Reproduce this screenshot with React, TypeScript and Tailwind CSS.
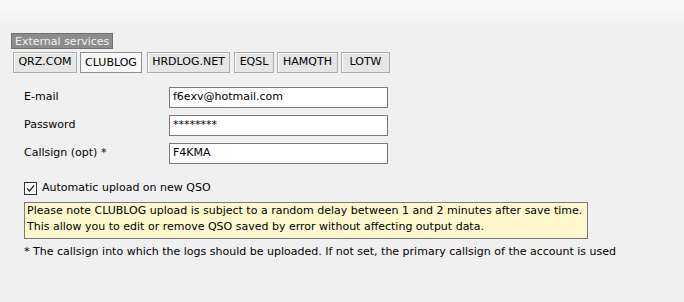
export default function App() {
  const tabs = [
    { name: 'QRZ.COM', w: 'w-[64px]', ml: 'ml-0' },
    { name: 'CLUBLOG', w: 'w-[62px]', ml: 'ml-[3px]', active: true },
    { name: 'HRDLOG.NET', w: 'w-[83px]', ml: 'ml-[5px]' },
    { name: 'EQSL', w: 'w-[40px]', ml: 'ml-[4px]' },
    { name: 'HAMQTH', w: 'w-[61px]', ml: 'ml-[3px]' },
    { name: 'LOTW', w: 'w-[49px]', ml: 'ml-[3px]' },
  ];

  const fields = [
    { label: 'E-mail', value: 'f6exv@hotmail.com' },
    { label: 'Password', value: '********' },
    { label: 'Callsign (opt) *', value: 'F4KMA' },
  ];

  return (
    <div className="w-[684px] h-[302px] overflow-hidden bg-[linear-gradient(to_bottom,#f8f8f8_0px,#f7f7f7_12px,#f0f0f0_26px)] text-[11px] text-black font-['DejaVu_Sans',sans-serif] pt-[33px]">
      {/* section label */}
      <div className="ml-[11px] inline-flex h-[16px] items-center px-[3px] bg-[#8c8c8c] border border-[#707070] text-[#f2f2f2] leading-none">
        External services
      </div>

      {/* service tabs */}
      <div className="flex ml-[13px] mt-[2px]">
        {tabs.map(t => (
          <div
            key={t.name}
            className={`${t.w} ${t.ml} h-[21px] flex items-center justify-center border ${
              t.active
                ? 'bg-[#f7f7f7] border-[#8f8f8f] pt-[2px]'
                : 'bg-[#e6e6e6] border-[#acacac] shadow-[inset_1px_1px_0_#ffffff]'
            }`}
          >
            {t.name}
          </div>
        ))}
      </div>

      {/* account fields */}
      <div className="flex flex-col gap-[7px] mt-[14px] pl-[24px]">
        {fields.map(f => (
          <div key={f.label} className="flex items-center">
            <div className="w-[145px]">{f.label}</div>
            <div className="w-[219px] h-[21px] bg-white border border-[#7a7a7a] flex items-center px-[3px]">
              {f.value}
            </div>
          </div>
        ))}
      </div>

      {/* auto upload */}
      <div className="flex items-center mt-[16px] pl-[24px]">
        <div className="w-[13px] h-[13px] border border-[#333333] bg-white flex items-center justify-center">
          <svg width="11" height="11" viewBox="0 0 11 11">
            <path d="M2 5.5 L4.5 8 L9 2.5" fill="none" stroke="#222" strokeWidth="1.2" />
          </svg>
        </div>
        <span className="ml-[5px]">Automatic upload on new QSO</span>
      </div>

      <div className="ml-[24px] mt-[5px] w-[564px] bg-[#fff8cf] border border-[#7a7a7a] px-[2px] pb-[3px] leading-[16px]">
        <div>Please note CLUBLOG upload is subject to a random delay between 1 and 2 minutes after save time.</div>
        <div>This allow you to edit or remove QSO saved by error without affecting output data.</div>
      </div>

      <div className="ml-[24px] mt-[5px]">
        * The callsign into which the logs should be uploaded. If not set, the primary callsign of the account is used
      </div>
    </div>
  );
}
